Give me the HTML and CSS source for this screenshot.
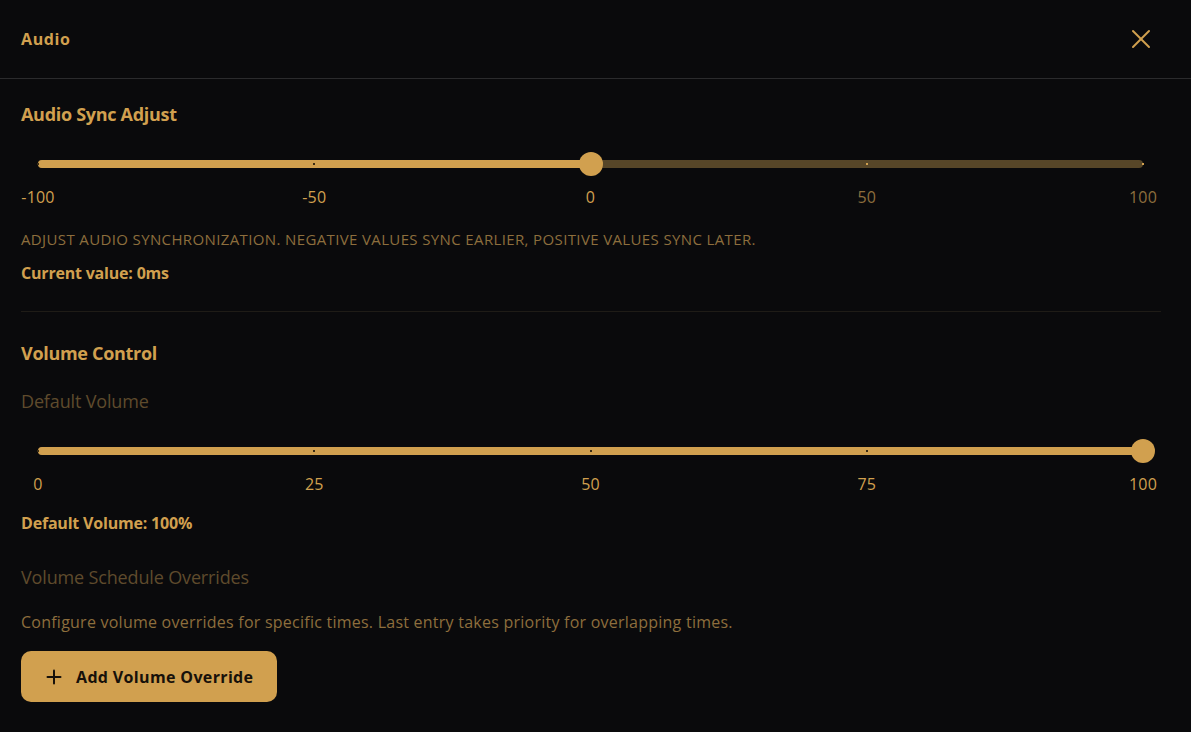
FILE: index.html
```html
<!DOCTYPE html>
<html lang="en">
<head>
<meta charset="utf-8">
<title>Audio</title>
<link rel="stylesheet" href="styles.css">
</head>
<body>
<div class="dialog">
  <header class="dialog-header">
    <h2 class="dialog-title">Audio</h2>
    <button class="close-btn" aria-label="Close">
      <svg width="20" height="20" viewBox="0 0 20 20" fill="none" stroke="currentColor" stroke-width="2" stroke-linecap="round"><path d="M18 2 2 18"/><path d="M2 2l16 16"/></svg>
    </button>
  </header>

  <main class="dialog-body">
    <section class="section">
      <h3 class="section-title">Audio Sync Adjust</h3>
      <div class="slider">
        <div class="track">
          <div class="fill" style="width:50%"></div>
          <span class="tick on" style="left:0%"></span>
          <span class="tick on" style="left:25%"></span>
          <span class="tick" style="left:75%"></span>
          <span class="tick" style="left:100%"></span>
          <span class="thumb" style="left:50%"></span>
        </div>
        <div class="marks">
          <span class="mark on"><span>-100</span></span>
          <span class="mark on"><span>-50</span></span>
          <span class="mark on"><span>0</span></span>
          <span class="mark"><span>50</span></span>
          <span class="mark"><span>100</span></span>
        </div>
      </div>
      <p class="caption">Adjust audio synchronization. Negative values sync earlier, positive values sync later.</p>
      <p class="value">Current value: 0ms</p>
    </section>

    <hr class="divider">

    <section class="section">
      <h3 class="section-title vol-title">Volume Control</h3>
      <div class="field-label">Default Volume</div>
      <div class="slider slider-vol">
        <div class="track">
          <div class="fill" style="width:100%"></div>
          <span class="tick on" style="left:0%"></span>
          <span class="tick on" style="left:25%"></span>
          <span class="tick on" style="left:50%"></span>
          <span class="tick on" style="left:75%"></span>
          <span class="thumb" style="left:100%"></span>
        </div>
        <div class="marks">
          <span class="mark on"><span>0</span></span>
          <span class="mark on"><span>25</span></span>
          <span class="mark on"><span>50</span></span>
          <span class="mark on"><span>75</span></span>
          <span class="mark on"><span>100</span></span>
        </div>
      </div>
      <p class="value vol-value">Default Volume: 100%</p>

      <div class="field-label schedule-label">Volume Schedule Overrides</div>
      <p class="help">Configure volume overrides for specific times. Last entry takes priority for overlapping times.</p>
      <button class="add-btn">
        <svg width="16" height="16" viewBox="0 0 16 16" fill="none" stroke="currentColor" stroke-width="2" stroke-linecap="round"><path d="M1.5 8h13"/><path d="M8 1.5v13"/></svg>
        <span>Add Volume Override</span>
      </button>
    </section>
  </main>
</div>
</body>
</html>
```

FILE: styles.css
```css
* { box-sizing: border-box; }

html, body {
  margin: 0;
  padding: 0;
  background: #0a0a0c;
}

body {
  font-family: "Open Sans", "Noto Sans", sans-serif;
  color: #d1a04f;
  height: 732px;
  overflow: hidden;
}

.dialog {
  width: 1191px;
}

.dialog-header {
  height: 79px;
  display: flex;
  align-items: center;
  justify-content: space-between;
  padding: 0 40px 0 21px;
  border-bottom: 1px solid #2b2b2d;
}

.dialog-title {
  margin: 0;
  font-size: 16px;
  font-weight: 700;
  letter-spacing: 0.6px;
}

.close-btn {
  background: none;
  border: 0;
  padding: 0;
  color: #d1a04f;
  display: flex;
  cursor: pointer;
}

.dialog-body {
  padding: 21px 30px 0 21px;
}

.section-title {
  margin: 0;
  font-size: 18px;
  line-height: 28px;
  font-weight: 700;
  letter-spacing: -0.3px;
}

/* slider */
.slider {
  display: flow-root;
  margin-top: 24px;
  padding: 0 18px 0 17px;
}

.track {
  position: relative;
  height: 8px;
  margin: 8px 0;
  border-radius: 4px;
  background: #574628;
}

.fill {
  height: 100%;
  border-radius: 4px;
  background: #d1a04f;
}

.tick {
  position: absolute;
  top: 3px;
  width: 2px;
  height: 2px;
  margin-left: -1px;
  background: #d1a04f;
}

.tick.on { background: #3a2c14; }

.thumb {
  position: absolute;
  top: 50%;
  width: 24px;
  height: 24px;
  margin: -12px 0 0 -12px;
  border-radius: 50%;
  background: #d1a04f;
}

.marks {
  margin-top: 17px;
  display: flex;
  justify-content: space-between;
  font-size: 16px;
  line-height: 24px;
  letter-spacing: 0.2px;
  color: #8d6e3d;
}

.mark {
  width: 0;
  display: flex;
  justify-content: center;
  white-space: nowrap;
}

.mark.on { color: #d1a04f; }

.caption {
  margin: 20px 0 0;
  font-size: 15px;
  line-height: 20px;
  text-transform: uppercase;
  color: #8d6e3d;
  letter-spacing: 0.37px;
}

.value {
  margin: 12px 0 0;
  font-size: 16px;
  line-height: 24px;
  font-weight: 700;
  letter-spacing: -0.2px;
}

.divider {
  margin: 26px 0 0;
  border: 0;
  height: 1px;
  background: #1f1c17;
}

.vol-title { margin-top: 27px; }

.field-label {
  margin-top: 20px;
  font-size: 18px;
  line-height: 28px;
  color: #5f4b2c;
  letter-spacing: -0.15px;
}

.slider-vol { margin-top: 24px; }

.vol-value { margin-top: 15px; }

.schedule-label { margin-top: 28px; }

.help {
  margin: 19px 0 0;
  font-size: 16px;
  line-height: 24px;
  color: #8d6e3d;
  letter-spacing: 0.24px;
}

.add-btn {
  margin-top: 17px;
  height: 51px;
  padding: 0 24px 0 25px;
  display: inline-flex;
  align-items: center;
  gap: 14px;
  border: 0;
  border-radius: 10px;
  background: #d1a04f;
  color: #17110a;
  font-family: inherit;
  font-size: 16px;
  font-weight: 700;
  letter-spacing: 0.35px;
  cursor: pointer;
}
```
